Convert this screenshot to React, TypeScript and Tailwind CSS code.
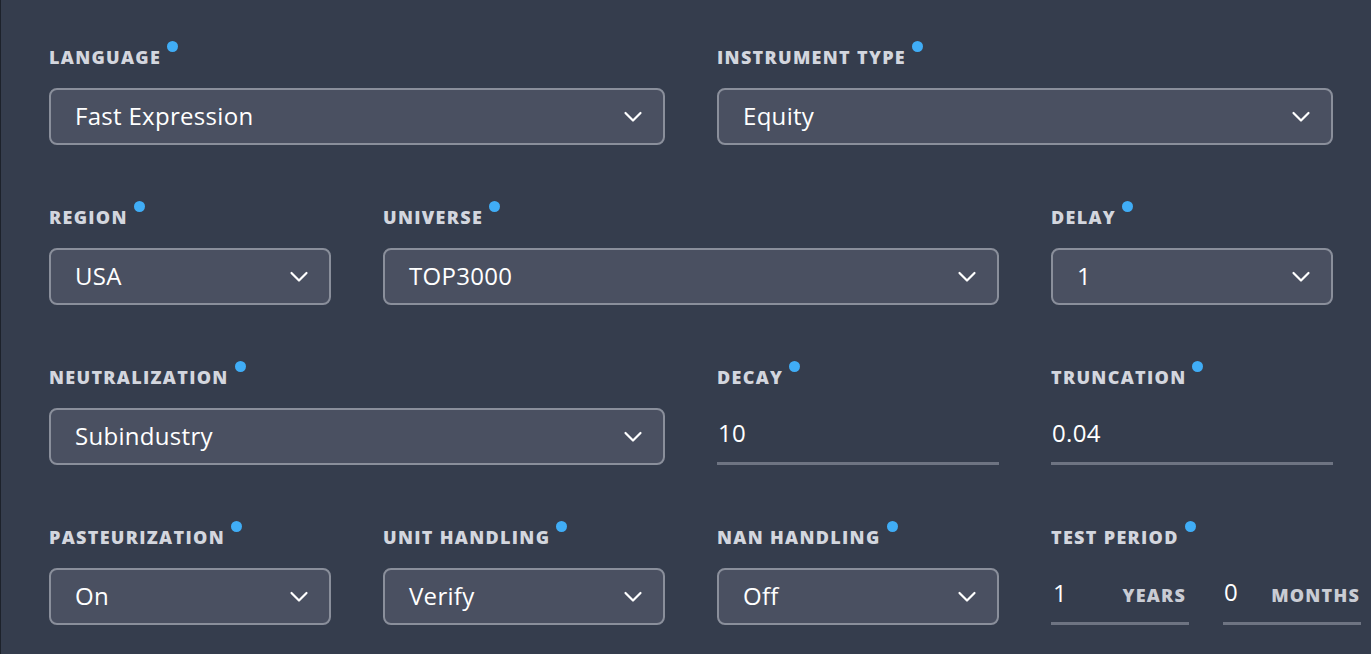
import React from "react";

const font = { fontFamily: '"Open Sans", "Noto Sans", sans-serif' };

function Label({ text }: { text: string }) {
  return (
    <div className="h-[24px] flex items-center">
      <span className="relative text-[18px] font-extrabold tracking-[1.3px] text-[#d3d6de] uppercase leading-none">
        {text}
        <span className="absolute -right-[17px] -top-[7px] w-[11px] h-[11px] rounded-full bg-[#40adf6]" />
      </span>
    </div>
  );
}

function Chevron() {
  return (
    <svg width="20" height="12" viewBox="0 0 20 12" fill="none">
      <path d="M2.5 2 L10 9.5 L17.5 2" stroke="#ffffff" strokeWidth="2.2" strokeLinecap="round" strokeLinejoin="round" />
    </svg>
  );
}

function Select({ label, value, span2 }: { label: string; value: string; span2?: boolean }) {
  return (
    <div className={span2 ? "col-span-2" : ""}>
      <Label text={label} />
      <div className="mt-[19px] h-[57px] rounded-[8px] border-2 border-[#8a8f9b] bg-[#4a5061] flex items-center justify-between pl-[24px] pr-[20px]">
        <span className="text-[24px] tracking-[0.3px] text-white leading-none -mt-[2px]">{value}</span>
        <Chevron />
      </div>
    </div>
  );
}

function Input({ label, value }: { label: string; value: string }) {
  return (
    <div>
      <Label text={label} />
      <div className="mt-[19px] h-[57px] border-b-[3px] border-[#6e7482] flex items-center pb-[5px] pl-[1px]">
        <span className="text-[24px] tracking-[0.3px] text-white leading-none">{value}</span>
      </div>
    </div>
  );
}

function TestPeriod() {
  return (
    <div>
      <Label text="Test period" />
      <div className="mt-[19px] flex gap-[34px] w-[311px]">
        <div className="w-[138px] h-[57px] border-b-[3px] border-[#6e7482] flex items-center justify-between pl-[2px] pr-[3px]">
          <span className="text-[24px] text-white leading-none -mt-[4px]">1</span>
          <span className="text-[18px] font-extrabold tracking-[1.2px] text-[#c9ccd4] leading-none">YEARS</span>
        </div>
        <div className="w-[138px] h-[57px] border-b-[3px] border-[#6e7482] flex items-center justify-between pl-[1px] pr-[1px]">
          <span className="text-[24px] text-white leading-none -mt-[6px]">0</span>
          <span className="text-[18px] font-extrabold tracking-[1.2px] text-[#c9ccd4] leading-none">MONTHS</span>
        </div>
      </div>
    </div>
  );
}

export default function App() {
  return (
    <div style={font} className="w-[1371px] h-[654px] bg-[#353d4d] border-l border-[#1d222b] overflow-hidden">
      <div className="pl-[48px] pt-[45px] grid grid-cols-[282px_282px_282px_282px] gap-x-[52px] gap-y-[60px]">
        <Select label="Language" value="Fast Expression" span2 />
        <Select label="Instrument type" value="Equity" span2 />
        <Select label="Region" value="USA" />
        <Select label="Universe" value="TOP3000" span2 />
        <Select label="Delay" value="1" />
        <Select label="Neutralization" value="Subindustry" span2 />
        <Input label="Decay" value="10" />
        <Input label="Truncation" value="0.04" />
        <Select label="Pasteurization" value="On" />
        <Select label="Unit handling" value="Verify" />
        <Select label="NaN handling" value="Off" />
        <TestPeriod />
      </div>
    </div>
  );
}
